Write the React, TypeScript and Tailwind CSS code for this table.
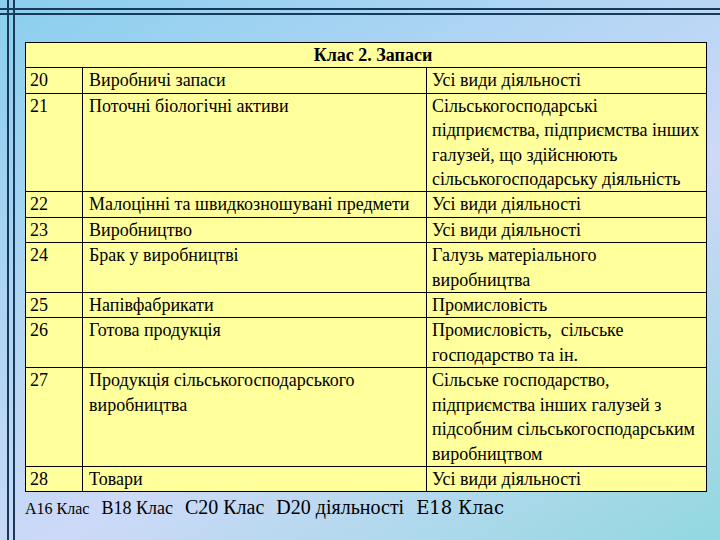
import React from 'react'

type Row = { code: string; name: string[]; scope: string[] }

const rows: Row[] = [
  { code: '20', name: ['Виробничі запаси'], scope: ['Усі види діяльності'] },
  {
    code: '21',
    name: ['Поточні біологічні активи'],
    scope: [
      'Сільськогосподарські',
      'підприємства, підприємства інших',
      'галузей, що здійснюють',
      'сільськогосподарську діяльність',
    ],
  },
  { code: '22', name: ['Малоцінні та швидкозношувані предмети'], scope: ['Усі види діяльності'] },
  { code: '23', name: ['Виробництво'], scope: ['Усі види діяльності'] },
  { code: '24', name: ['Брак у виробництві'], scope: ['Галузь матеріального', 'виробництва'] },
  { code: '25', name: ['Напівфабрикати'], scope: ['Промисловість'] },
  { code: '26', name: ['Готова продукція'], scope: ['Промисловість,  сільське', 'господарство та ін.'] },
  {
    code: '27',
    name: ['Продукція сільськогосподарського', 'виробництва'],
    scope: [
      'Сільське господарство,',
      'підприємства інших галузей з',
      'підсобним сільськогосподарським',
      'виробництвом',
    ],
  },
  { code: '28', name: ['Товари'], scope: ['Усі види діяльності'] },
]

function Lines({ lines }: { lines: string[] }) {
  return (
    <>
      {lines.map((l, i) => (
        <div key={i} className="whitespace-pre">
          {l}
        </div>
      ))}
    </>
  )
}

// the two horizontal frame rules at the top of the slide
function FrameRules() {
  return (
    <>
      <div className="mt-[8px] h-[2px] bg-[#17395a]" />
      <div className="mt-[3px] h-[2px] bg-[#17395a]" />
    </>
  )
}

export default function App() {
  return (
    <div className="flex w-[720px] h-[540px] overflow-hidden bg-linear-[150deg] from-[#8bcfee] via-[#cdd9f8] via-60% to-[#92d8e0]">
      <div className="w-[7px] shrink-0">
        <FrameRules />
      </div>
      <div className="w-[2px] shrink-0 bg-[#17395a]" />
      <div className="w-[4px] shrink-0">
        <FrameRules />
      </div>
      <div className="w-[2px] shrink-0 bg-[#17395a]" />

      <div className="flex-1 flex flex-col">
        <FrameRules />
        <div className="pl-[10px] pt-[27px]">
          <div className="w-[682px] border border-black bg-[#ffff9c] text-black text-[18px] leading-[24.4px] font-['Liberation_Serif']">
            <div className="text-center font-bold pl-[14px]">Клас 2. Запаси</div>
            {rows.map((r) => (
              <div key={r.code} className="flex border-t border-black">
                <div className="w-[57px] shrink-0 border-r border-black pl-[4px]">{r.code}</div>
                <div className="w-[344px] shrink-0 border-r border-black pl-[6px]">
                  <Lines lines={r.name} />
                </div>
                <div className="flex-1 pl-[5px]">
                  <Lines lines={r.scope} />
                </div>
              </div>
            ))}
          </div>
          <div className="flex gap-3 items-baseline text-black">
            <span className="font-['Liberation_Serif'] text-[16px]">A16 Клас</span>
            <span className="font-['Liberation_Serif'] text-[18px]">B18 Клас</span>
            <span className="font-['Liberation_Serif'] text-[20px]">C20 Клас</span>
            <span className="font-['Liberation_Serif'] text-[20px]">D20 діяльності</span>
            <span className="font-['DejaVu_Serif'] text-[18px]">E18 Клас</span>
          </div>
        </div>
      </div>
    </div>
  )
}
